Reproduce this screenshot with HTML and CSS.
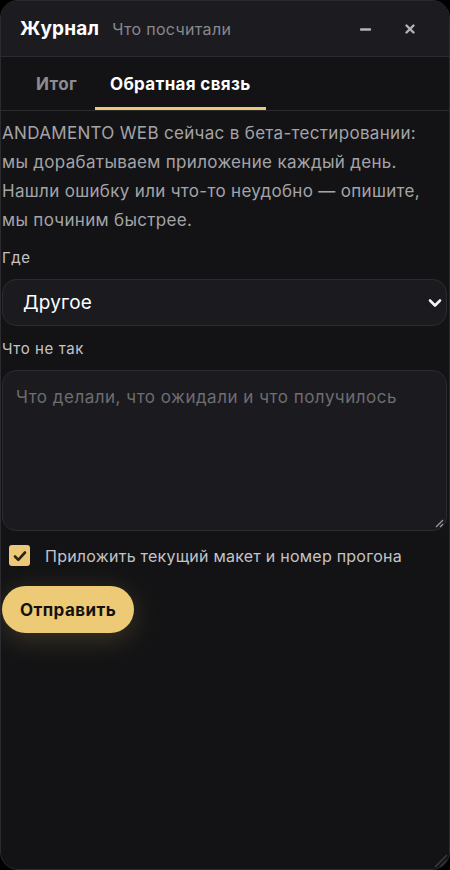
FILE: index.html
```html
<!DOCTYPE html>
<html lang="ru">
<head>
    <meta charset="UTF-8">
    <meta name="viewport" content="width=device-width, initial-scale=1.0">
    <title>Журнал</title>
    <link rel="stylesheet" href="styles.css">
</head>
<body>
    <div class="window">
        <div class="header">
            <span class="title">Журнал</span>
            <span class="subtitle">Что посчитали</span>
            <span class="spacer"></span>
            <button class="win-btn" type="button">
                <svg width="12" height="12" viewBox="0 0 12 12"><path d="M1 6.5h9" stroke="#b4b4b8" stroke-width="2.4" stroke-linecap="round"/></svg>
            </button>
            <button class="win-btn" type="button">
                <svg width="12" height="12" viewBox="0 0 12 12"><path d="M2.5 2.5l7 7M9.5 2.5l-7 7" stroke="#b4b4b8" stroke-width="2.4" stroke-linecap="round"/></svg>
            </button>
        </div>
        <div class="tabs">
            <div class="tab">Итог</div>
            <div class="tab active">Обратная связь</div>
        </div>
        <div class="content">
            <p class="intro">ANDAMENTO WEB сейчас в бета-тестировании: мы дорабатываем приложение каждый день. Нашли ошибку или что-то неудобно — опишите, мы починим быстрее.</p>

            <label class="field-label">Где</label>
            <div class="select">
                <span>Другое</span>
                <svg width="14" height="10" viewBox="0 0 14 10"><path d="M2 2.5l5 5 5-5" fill="none" stroke="#f2f2f2" stroke-width="2.6" stroke-linecap="round" stroke-linejoin="round"/></svg>
            </div>

            <label class="field-label">Что не так</label>
            <div class="textarea">
                <span class="placeholder">Что делали, что ожидали и что получилось</span>
                <svg class="grip" width="10" height="10" viewBox="0 0 10 10"><path d="M9 2L2 9M9 6L6 9" stroke="#9a9aa0" stroke-width="1.2"/></svg>
            </div>

            <div class="check-row">
                <span class="checkbox">
                    <svg width="14" height="12" viewBox="0 0 14 12"><path d="M2 6.5l3.3 3.3L12 2.5" fill="none" stroke="#2a2418" stroke-width="2.6" stroke-linecap="round" stroke-linejoin="round"/></svg>
                </span>
                <span class="check-label">Приложить текущий макет и номер прогона</span>
            </div>

            <button class="send" type="button">Отправить</button>
        </div>
        <svg class="corner-grip" width="24" height="24" viewBox="0 0 24 24"><path d="M22 10L10 22M22 15L15 22" stroke="#3a3a40" stroke-width="1.5"/></svg>
    </div>
</body>
</html>
```

FILE: styles.css
```css
body {
    margin: 0;
    background-color: #000;
    font-family: Inter, "Noto Sans", sans-serif;
    letter-spacing: 0.02em;
}
.window {
    position: relative;
    width: 450px;
    height: 870px;
    box-sizing: border-box;
    border: 1px solid #2a2a2f;
    border-radius: 18px;
    background-color: #131315;
    overflow: hidden;
    display: flex;
    flex-direction: column;
}
.header {
    height: 55px;
    display: flex;
    align-items: center;
    padding: 0 33px 0 19px;
    background-color: #1c1c20;
    border-bottom: 1px solid #2a2a2f;
}
.title {
    color: #fff;
    font-size: 19px;
    font-weight: 700;
    letter-spacing: 0.01em;
}
.subtitle {
    color: #88888d;
    font-size: 16px;
    margin-left: 13px;
}
.spacer {
    flex: 1;
}
.win-btn {
    background: none;
    border: none;
    padding: 0;
    width: 12px;
    height: 12px;
    margin-left: 32px;
    display: flex;
}
.tabs {
    display: flex;
    height: 53px;
    padding-left: 20px;
    gap: 3px;
    border-bottom: 1px solid #2a2a2f;
}
.tab {
    padding: 0 15px;
    display: flex;
    align-items: center;
    font-size: 17px;
    font-weight: 700;
    letter-spacing: 0.02em;
    color: #8c8c90;
    border-bottom: 3px solid transparent;
    padding-top: 3px;
}
.tab.active {
    color: #fff;
    border-bottom-color: #e9c87a;
}
.content {
    padding: 8px 2px 0 1px;
    display: flex;
    flex-direction: column;
    align-items: flex-start;
}
.intro {
    margin: 0;
    max-width: 432px;
    font-size: 17px;
    line-height: 29px;
    color: #a4a4a8;
}
.field-label {
    display: block;
    font-size: 15px;
    line-height: 20px;
    letter-spacing: 0.04em;
    color: #c4c4c8;
    margin-top: 13px;
}
.select {
    margin-top: 11px;
    align-self: stretch;
    height: 47px;
    box-sizing: border-box;
    border: 1px solid #2b2b30;
    border-radius: 14px;
    background-color: #1b1b1f;
    display: flex;
    align-items: center;
    justify-content: space-between;
    padding: 0 4px 0 20px;
    color: #fff;
    font-size: 19px;
    letter-spacing: 0.01em;
}
.textarea {
    position: relative;
    margin-top: 11px;
    align-self: stretch;
    height: 161px;
    box-sizing: border-box;
    border: 1px solid #2b2b30;
    border-radius: 14px;
    background-color: #1b1b1f;
    padding: 15px 13px;
}
.placeholder {
    font-size: 17px;
    line-height: 22px;
    letter-spacing: 0.03em;
    color: #6d6d72;
}
.grip {
    position: absolute;
    right: 2px;
    bottom: 2px;
}
.check-row {
    display: flex;
    align-items: center;
    margin-top: 14px;
    padding-left: 7px;
}
.checkbox {
    width: 21px;
    height: 21px;
    border-radius: 3px;
    background-color: #edc877;
    display: flex;
    align-items: center;
    justify-content: center;
}
.check-label {
    margin-left: 15px;
    font-size: 16px;
    letter-spacing: 0.015em;
    color: #c4c4c8;
}
.send {
    margin-top: 20px;
    height: 47px;
    padding: 0 18px;
    border: none;
    border-radius: 24px;
    background-color: #edca75;
    color: #141210;
    font-family: Inter, "Noto Sans", sans-serif;
    font-size: 17px;
    font-weight: 700;
    letter-spacing: 0.025em;
    box-shadow: 0 6px 28px rgba(237, 202, 117, 0.2);
}
.corner-grip {
    position: absolute;
    right: 0;
    bottom: 0;
}
```
